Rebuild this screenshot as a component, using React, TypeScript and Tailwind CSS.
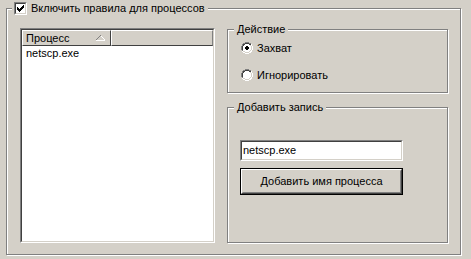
import React from "react"

function Etched({ className, children }: { className?: string; children?: React.ReactNode }) {
  return (
    <div className={"relative border border-[#808080] shadow-[inset_1px_1px_0_#fff,1px_1px_0_#fff] " + (className ?? "")}>
      {children}
    </div>
  )
}

function Radio({ checked }: { checked?: boolean }) {
  return (
    <svg width="12" height="12" viewBox="0 0 12 12" shapeRendering="crispEdges">
      <circle cx="6" cy="6" r="5.5" fill="#fff" />
      <path d="M4 0h4v1H4zM2 1h2v1H2zM8 1h2v1H8zM1 2h1v2H1zM0 4h1v4H0zM1 8h1v1H1z" fill="#808080" />
      <path d="M4 1h4v1H4zM2 2h2v1H2zM8 2h2v1H8zM2 3h1v1H2zM1 4h1v4H1z" fill="#404040" />
      <path d="M10 2h1v2h-1zM11 4h1v4h-1zM10 8h1v2h-1zM8 10h2v1H8zM2 10h2v1H2zM4 11h4v1H4zM1 9h1v1H1z" fill="#fff" />
      <path d="M9 3h1v1H9zM10 4h1v4h-1zM9 8h1v1H9zM8 9h1v1H8zM2 9h2v1H2zM4 10h4v1H4zM3 9h1v0z" fill="#d4d0c8" />
      {checked && <path d="M5 4h2v1h1v2H7v1H5V7H4V5h1z" fill="#000" />}
    </svg>
  )
}

export default function App() {
  return (
    <div className="w-[471px] h-[259px] bg-[#d4d0c8] pt-[8px] pl-[6px] font-['Liberation_Sans',Arial,sans-serif] text-[11px] leading-[13px] text-black">
      <Etched className="w-[455px] h-[247px]">
        {/* checkbox legend */}
        <div className="absolute left-[5px] -top-[7px] flex items-center bg-[#d4d0c8] pl-[2px] pr-[3px] h-[13px]">
          <div className="w-[13px] h-[13px] border border-t-[#808080] border-l-[#808080] border-b-white border-r-white">
            <div className="w-full h-full bg-white border border-t-[#404040] border-l-[#404040] border-b-[#d4d0c8] border-r-[#d4d0c8]">
              <svg width="9" height="9" viewBox="0 0 9 9" shapeRendering="crispEdges">
                <path d="M1 3h1v1h1v1h1V4h1V3h1V2h1V1h1v3H7v1H6v1H5v1H4v1H3V7H2V6H1z" fill="#000" />
              </svg>
            </div>
          </div>
          <span className="ml-[4px]">Включить правила для процессов</span>
        </div>

        <div className="flex pl-[13px] pt-[19px]">
          {/* process list */}
          <div className="w-[195px] h-[215px] border border-t-[#808080] border-l-[#808080] border-b-white border-r-white">
            <div className="w-full h-full bg-white border border-t-[#404040] border-l-[#404040] border-b-[#d4d0c8] border-r-[#d4d0c8]">
              <div className="flex h-[16px]">
                <div className="w-[89px] h-full bg-[#d4d0c8] border border-t-white border-l-white border-b-[#404040] border-r-[#404040] flex items-center justify-between pl-[3px] pr-[5px]">
                  <span>Процесс</span>
                  <svg width="9" height="6" viewBox="0 0 9 6" shapeRendering="crispEdges">
                    <path d="M4 0h1v1H4zM3 1h1v1H3zM2 2h1v1H2zM1 3h1v1H1zM0 4h1v1H0z" fill="#808080" />
                    <path d="M5 1h1v1H5zM6 2h1v1H6zM7 3h1v1H7zM8 4h1v1H8zM0 5h9v1H0z" fill="#fff" />
                  </svg>
                </div>
                <div className="flex-1 h-full bg-[#d4d0c8] border border-t-white border-l-white border-b-[#404040] border-r-[#808080]" />
              </div>
              <div className="pl-[4px] pt-[1px]">netscp.exe</div>
            </div>
          </div>

          {/* right column */}
          <div className="ml-[12px] mt-[1px] flex flex-col">
            <Etched className="w-[221px] h-[64px]">
              <div className="absolute left-[6px] -top-[7px] px-[3px] bg-[#d4d0c8]">Действие</div>
              <div className="flex items-center h-[12px] mt-[12px] ml-[13px]">
                <Radio checked />
                <span className="ml-[4px]">Захват</span>
              </div>
              <div className="flex items-center h-[12px] mt-[15px] ml-[13px]">
                <Radio />
                <span className="ml-[4px]">Игнорировать</span>
              </div>
            </Etched>

            <Etched className="w-[221px] h-[136px] mt-[14px]">
              <div className="absolute left-[6px] -top-[7px] px-[3px] bg-[#d4d0c8]">Добавить запись</div>
              <div className="ml-[12px] mt-[32px] w-[163px] h-[21px] border border-t-[#808080] border-l-[#808080] border-b-white border-r-white">
                <div className="w-full h-full bg-white border border-t-[#404040] border-l-[#404040] border-b-[#d4d0c8] border-r-[#d4d0c8] flex items-center pl-[1px]">
                  netscp.exe
                </div>
              </div>
              <div className="ml-[12px] mt-[7px] w-[163px] h-[27px] border border-black">
                <div className="w-full h-full border border-t-white border-l-white border-b-[#404040] border-r-[#404040]">
                  <div className="w-full h-full border border-t-[#d4d0c8] border-l-[#d4d0c8] border-b-[#808080] border-r-[#808080] flex items-center justify-center">
                    Добавить имя процесса
                  </div>
                </div>
              </div>
            </Etched>
          </div>
        </div>
      </Etched>
    </div>
  )
}
